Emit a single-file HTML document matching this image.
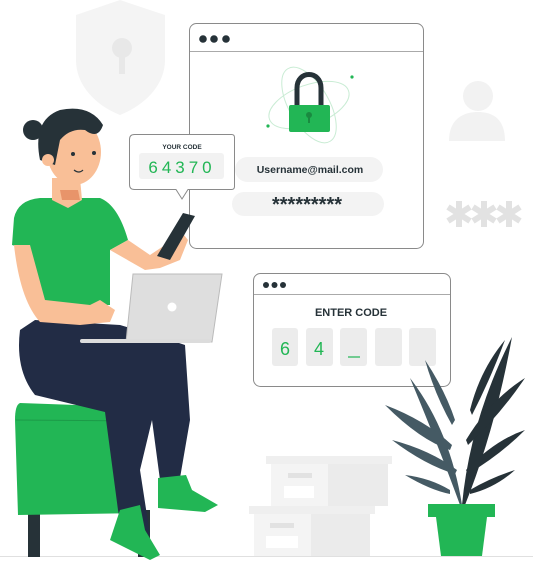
<!DOCTYPE html>
<html><head><meta charset="utf-8"><style>
html,body{margin:0;padding:0;background:#fff;width:533px;height:561px;overflow:hidden}
svg{display:block}
text{font-family:"Liberation Sans",sans-serif}
</style></head><body>
<svg width="533" height="561" viewBox="0 0 533 561" xmlns="http://www.w3.org/2000/svg">
<path d="M120 0 L165 15 L165 60 C165 85 145 105 120 115 C95 105 76 85 76 60 L76 15 Z" fill="#f4f4f4"/>
<circle cx="122" cy="48" r="10" fill="#e8e8e8"/><rect x="119" y="50" width="6" height="24" fill="#e8e8e8"/>
<circle cx="478" cy="96" r="15" fill="#f2f2f2"/>
<path d="M449 141 C449 120 462 112 478 112 C494 112 505 120 505 141 Z" fill="#f2f2f2"/>
<g stroke="#e2e2e2" stroke-width="6">
<path d="M459 201 V227 M448 207 L470 221 M448 221 L470 207"/>
<path d="M484 201 V227 M473 207 L495 221 M473 221 L495 207"/>
<path d="M509 201 V227 M498 207 L520 221 M498 221 L520 207"/>
</g>
<rect x="189.5" y="23.5" width="234" height="225" rx="7" fill="#fff" stroke="#8a8a8a"/>
<line x1="190" y1="51.5" x2="423" y2="51.5" stroke="#aaa"/>
<circle cx="203" cy="39" r="3.8" fill="#263238"/><circle cx="214" cy="39" r="3.8" fill="#263238"/><circle cx="226" cy="39" r="3.8" fill="#263238"/>
<ellipse cx="309" cy="105" rx="42" ry="20" fill="none" stroke="#c9ecd4" transform="rotate(-20 309 105)"/>
<ellipse cx="309" cy="105" rx="42" ry="20" fill="none" stroke="#c9ecd4" transform="rotate(60 309 105)"/>
<path d="M297 106 L297 88 C297 70 321 70 321 88 L321 106" fill="none" stroke="#263238" stroke-width="5"/>
<rect x="289" y="105" width="41" height="27" rx="2" fill="#22b655"/>
<circle cx="309" cy="115" r="3" fill="#1a8a40"/><rect x="308" y="116" width="2" height="7" fill="#1a8a40"/>
<circle cx="352" cy="77" r="1.6" fill="#22b655"/><circle cx="268" cy="126" r="1.6" fill="#22b655"/>
<rect x="235" y="157" width="148" height="25" rx="12.5" fill="#f3f3f3"/>
<text x="310" y="173" font-size="10.5" font-weight="bold" fill="#263238" text-anchor="middle">Username@mail.com</text>
<rect x="232" y="192" width="152" height="24" rx="12" fill="#f3f3f3"/>
<text x="307" y="211" font-size="20" font-weight="bold" fill="#263238" text-anchor="middle">*********</text>
<rect x="253.5" y="273.5" width="197" height="113" rx="7" fill="#fff" stroke="#8a8a8a"/>
<line x1="254" y1="294.5" x2="450" y2="294.5" stroke="#aaa"/>
<circle cx="266" cy="285" r="3" fill="#263238"/><circle cx="274.5" cy="285" r="3" fill="#263238"/><circle cx="283" cy="285" r="3" fill="#263238"/>
<text x="351" y="316" font-size="11" font-weight="bold" fill="#263238" text-anchor="middle">ENTER CODE</text>
<rect x="272" y="328" width="26" height="38" rx="3" fill="#ececec"/>
<rect x="306" y="328" width="27" height="38" rx="3" fill="#ececec"/>
<rect x="340" y="328" width="27" height="38" rx="3" fill="#ececec"/>
<rect x="375" y="328" width="27" height="38" rx="3" fill="#ececec"/>
<rect x="409" y="328" width="27" height="38" rx="3" fill="#ececec"/>
<text x="285" y="355" font-size="18" fill="#22b655" text-anchor="middle">6</text>
<text x="319" y="355" font-size="18" fill="#22b655" text-anchor="middle">4</text>
<line x1="348" y1="357" x2="360" y2="357" stroke="#22b655" stroke-width="1.2"/>
<rect x="266" y="456" width="126" height="8" fill="#efefef"/>
<rect x="271" y="464" width="117" height="42" fill="#ebebeb"/>
<rect x="271" y="464" width="57" height="42" fill="#f4f4f4"/>
<rect x="288" y="473" width="24" height="5" fill="#e2e2e2"/><rect x="284" y="486" width="30" height="12" fill="#fff"/>
<rect x="249" y="506" width="126" height="8" fill="#efefef"/>
<rect x="254" y="514" width="116" height="42" fill="#ebebeb"/>
<rect x="254" y="514" width="57" height="42" fill="#f4f4f4"/>
<rect x="270" y="523" width="24" height="5" fill="#e2e2e2"/><rect x="266" y="536" width="32" height="12" fill="#fff"/>
<g fill="#455a64">
<path d="M462 505 Q470 420 512 337 Q495 430 465 505Z" fill="#263238"/>
<path d="M462 505 Q450 430 410 378 Q440 450 460 505Z"/>
<path d="M466 440 Q490 400 525 378 Q500 415 468 445Z" fill="#263238"/>
<path d="M466 470 Q495 440 525 430 Q500 455 468 474Z" fill="#263238"/>
<path d="M457 470 Q430 450 392 440 Q425 465 455 474Z"/>
<path d="M452 445 Q425 420 385 405 Q420 440 450 450Z"/>
<path d="M470 410 Q480 370 505 340 Q490 380 472 415Z" fill="#263238"/>
<path d="M450 490 Q430 478 405 475 Q430 490 450 494Z"/>
<path d="M470 490 Q490 478 515 470 Q495 488 470 494Z" fill="#263238"/>
<path d="M455 420 Q445 390 425 360 Q435 395 452 425Z"/>
</g>
<rect x="428" y="504" width="67" height="13" fill="#22b655"/>
<path d="M436 517 L487 517 L482 556 L441 556Z" fill="#22b655"/>
<line x1="0" y1="556.5" x2="533" y2="556.5" stroke="#e0e0e0"/>
<rect x="28" y="510" width="12" height="47" fill="#263238"/>
<rect x="138" y="510" width="12" height="47" fill="#263238"/>
<path d="M20 403 L104 406 L140 420 L140 513 L18 515 L15 420 Q15 405 20 403Z" fill="#22b655"/>
<line x1="16" y1="420" x2="140" y2="421" stroke="#1c9a48"/>
<path d="M20 330 Q15 370 35 395 L105 412 L118 510 L125 545 L150 535 L140 470 L152 420 L160 480 L180 478 L190 420 L185 345 L170 340 L120 325 L35 320Z" fill="#222c45"/>
<path d="M158 478 L186 475 L192 490 L218 505 L205 512 L158 508Z" fill="#22b655"/>
<path d="M120 510 L140 505 L145 530 L160 555 L150 560 L110 540Z" fill="#22b655"/>
<path d="M14 218 Q18 200 40 198 L100 198 Q118 205 128 240 L110 250 L110 305 L40 305 L30 250 L12 245Z" fill="#22b655"/>
<path d="M14 245 L30 245 L45 300 L90 305 L100 300 L115 310 L110 322 L80 325 L40 322 Q20 300 14 245Z" fill="#f9bf97"/>
<path d="M110 250 L128 240 L150 255 L165 245 L180 230 L188 240 L180 260 L160 268 L145 270Z" fill="#f9bf97"/>
<path d="M183 213 L195 216 L170 260 L157 256Z" fill="#263238"/>
<path d="M52 178 L80 178 L82 200 L68 208 L52 200Z" fill="#f9bf97"/>
<path d="M60 190 L78 190 L80 200 L62 200Z" fill="#e8946a"/>
<ellipse cx="74" cy="152" rx="27" ry="33" fill="#f9bf97"/>
<path d="M40 160 Q32 120 60 110 Q90 104 103 125 Q98 140 85 130 Q70 128 60 140 L55 165 Z" fill="#263238"/>
<circle cx="33" cy="130" r="10" fill="#263238"/>
<circle cx="48" cy="160" r="6" fill="#f9bf97"/>
<circle cx="73" cy="154" r="2" fill="#263238"/><circle cx="94" cy="153" r="2" fill="#263238"/>
<path d="M74 170 Q79 174 83 170" fill="none" stroke="#263238" stroke-width="1.2"/>
<path d="M133 274 L222 274 L212 342 L126 342Z" fill="#dedede" stroke="#bbb"/>
<circle cx="172" cy="307" r="4.5" fill="#fff"/>
<rect x="80" y="339" width="131" height="4" rx="2" fill="#dcdcdc"/>
<path d="M134.5 134.5 L231.5 134.5 Q234.5 134.5 234.5 137.5 L234.5 186.5 Q234.5 189.5 231.5 189.5 L188 189.5 L182 199 L176 189.5 L134.5 189.5 Q129.5 189.5 129.5 184.5 L129.5 139.5 Q129.5 134.5 134.5 134.5Z" fill="#fff" stroke="#8a8a8a"/>
<text x="182" y="149" font-size="6.5" font-weight="bold" fill="#263238" text-anchor="middle">YOUR CODE</text>
<rect x="139" y="153" width="85" height="26" rx="3" fill="#f2f2f2"/>
<text x="182" y="173" font-size="17" fill="#22b655" text-anchor="middle" letter-spacing="4">64370</text>
</svg>
</body></html>
